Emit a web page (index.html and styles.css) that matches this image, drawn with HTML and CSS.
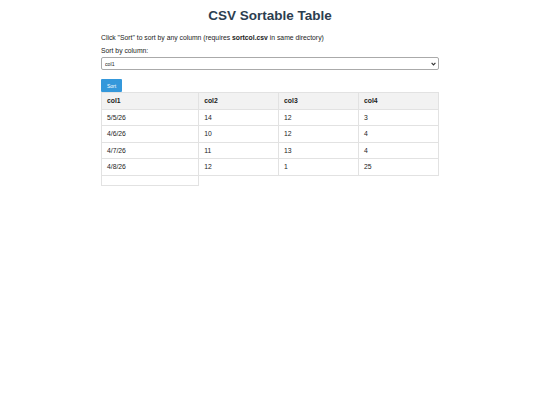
FILE: index.html
```html
<!DOCTYPE html>
<html lang="en">
<head>
<meta charset="utf-8">
<title>CSV Sortable Table</title>
<link rel="stylesheet" href="styles.css">
</head>
<body>
<div class="container">
  <h1 class="title">CSV Sortable Table</h1>
  <p class="intro">Click "Sort" to sort by any column (requires <strong>sortcol.csv</strong> in same directory)</p>
  <label class="field-label" for="col">Sort by column:</label>
  <div class="select-wrap">
    <select id="col" class="select">
      <option>col1</option>
      <option>col2</option>
      <option>col3</option>
      <option>col4</option>
    </select>
    <svg class="chevron" width="5" height="4" viewBox="0 0 5 4" aria-hidden="true"><path d="M0.6 0.8 L2.5 2.9 L4.4 0.8" fill="none" stroke="#333" stroke-width="1.1"/></svg>
  </div>
  <button class="sort-btn" type="button">Sort</button>
  <table class="data">
    <thead>
      <tr><th>col1</th><th>col2</th><th>col3</th><th>col4</th></tr>
    </thead>
    <tbody>
      <tr><td>5/5/26</td><td>14</td><td>12</td><td>3</td></tr>
      <tr><td>4/6/26</td><td>10</td><td>12</td><td>4</td></tr>
      <tr><td>4/7/26</td><td>11</td><td>13</td><td>4</td></tr>
      <tr><td>4/8/26</td><td>12</td><td>1</td><td>25</td></tr>
      <tr><td class="empty"></td></tr>
    </tbody>
  </table>
</div>
</body>
</html>
```
FILE: styles.css
```css
html, body {
  margin: 0;
  padding: 0;
  background: #fff;
}
body {
  font-family: "Liberation Sans", Arial, sans-serif;
  color: #222;
}
.container {
  width: 338px;
  margin: 0 auto;
  padding-top: 8px;
}
.title {
  margin: 0 0 10px;
  text-align: center;
  font-size: 13.5px;
  line-height: 16px;
  font-weight: bold;
  color: #2c3e50;
}
.intro {
  margin: 0 0 5px;
  font-size: 6.8px;
  line-height: 8px;
}
.field-label {
  display: block;
  font-size: 6.8px;
  line-height: 8px;
  margin-bottom: 2px;
}
.select-wrap {
  position: relative;
  height: 13px;
  margin-bottom: 9px;
}
.select {
  display: block;
  width: 338px;
  height: 13px;
  box-sizing: border-box;
  margin: 0;
  padding: 0 3px;
  font-family: "Liberation Sans", Arial, sans-serif;
  font-size: 5.2px;
  color: #222;
  border: 1px solid #aaa;
  border-radius: 2px;
  background: #fff;
  -webkit-appearance: none;
  appearance: none;
}
.chevron {
  position: absolute;
  right: 3px;
  top: 5px;
}
.sort-btn {
  display: block;
  width: 21px;
  height: 13px;
  padding: 0;
  margin: 0;
  border: none;
  border-radius: 1px;
  background: #3498db;
  color: #fff;
  font-family: "Liberation Sans", Arial, sans-serif;
  font-size: 5px;
}
.data {
  width: 338px;
  border-collapse: collapse;
  font-size: 6.8px;
  color: #222;
}
.data th, .data td {
  border: 1px solid #e2e2e2;
  padding: 4px 5px;
  text-align: left;
  line-height: 7.5px;
}
.data td.empty {
  height: 0;
  padding: 4.5px 5px;
}
.data th {
  background: #f2f2f2;
  font-weight: bold;
}
```
